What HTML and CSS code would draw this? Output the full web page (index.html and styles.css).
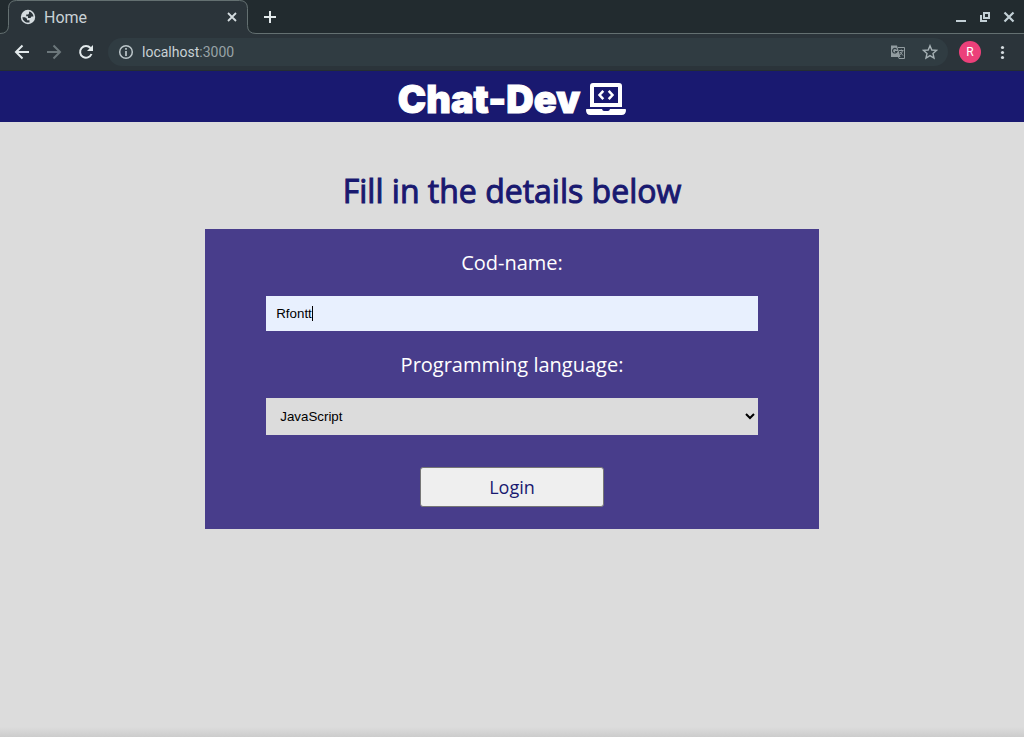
FILE: index.html
```html
<!DOCTYPE html>
<html lang="en">
<head>
<meta charset="utf-8">
<title>Home</title>
<link rel="stylesheet" href="styles.css">
</head>
<body>
<div class="browser">
  <div class="tab-strip">
    <div class="tab">
      <svg class="tab-shape" viewBox="0 0 256 34" aria-hidden="true"><path d="M0 33.5Q8.500 33.500 8.500 25.500V8.500Q8.500 .5 16.500 .5H239.500Q247.500 .5 247.500 8.500V25.500Q247.500 33.500 256 33.500V34H0Z" fill="#2b343a"/><path d="M0 33.500Q8.500 33.500 8.500 25.500V8.500Q8.500 .5 16.500 .5H239.500Q247.500 .5 247.500 8.500V25.500Q247.500 33.500 256 33.500" fill="none" stroke="#647071"/></svg>
      <svg class="icon" viewBox="0 0 16 16" aria-hidden="true"><circle cx="8" cy="8" r="7.200" fill="#d5dce0"/><path d="M9 2.600C11.500 3 13.300 5 13.500 7.500H11.500L10.500 9H8V7.200H6.200V5.500H8.200L9 4.500Z M2.400 8.200H5L7 9.800V11.200H9.500V13.400C6 14.300 2.600 11.800 2.400 8.200Z" fill="#2b343a"/></svg>
      <span class="tab-title">Home</span>
      <button class="icon-button" aria-label="Close tab"><svg class="icon" viewBox="0 0 16 16"><path d="M4 4L12 12M12 4L4 12" stroke="#d5dce0" stroke-width="1.800"/></svg></button>
    </div>
    <div class="strip-rest">
      <button class="icon-button" aria-label="New tab"><svg class="icon" viewBox="0 0 16 16"><path d="M8 2V14M2 8H14" stroke="#e3eaec" stroke-width="2"/></svg></button>
      <div class="window-buttons">
        <button class="icon-button" aria-label="Minimize"><svg class="icon" viewBox="0 0 16 16"><path d="M3 12H13" stroke="#c3d0d6" stroke-width="2"/></svg></button>
        <button class="icon-button" aria-label="Restore"><svg class="icon" viewBox="0 0 16 16"><path d="M7 4H12V9H7Z" fill="none" stroke="#c3d0d6" stroke-width="2"/><path d="M4 6V12H10" fill="none" stroke="#c3d0d6" stroke-width="2"/></svg></button>
        <button class="icon-button" aria-label="Close"><svg class="icon" viewBox="0 0 16 16"><path d="M3.500 3.500L12.500 12.500M12.500 3.500L3.500 12.500" stroke="#c3d0d6" stroke-width="2.200"/></svg></button>
      </div>
    </div>
  </div>
  <div class="toolbar">
    <button class="icon-button" aria-label="Back"><svg class="icon" viewBox="0 0 16 16"><path d="M15 8H2.500M8.500 1.500L2 8L8.500 14.500" fill="none" stroke="#e3eaec" stroke-width="2"/></svg></button>
    <button class="icon-button" aria-label="Forward"><svg class="icon" viewBox="0 0 16 16"><path d="M1 8H13.500M7.500 1.500L14 8L7.500 14.500" fill="none" stroke="#6c777b" stroke-width="2"/></svg></button>
    <button class="icon-button" aria-label="Reload"><svg class="icon" viewBox="0 0 16 16"><path d="M13.500 10A5.900 5.900 0 1 1 12.500 4" fill="none" stroke="#e3eaec" stroke-width="2"/><path d="M15 1V7H9Z" fill="#e3eaec"/></svg></button>
    <div class="address">
      <svg class="icon" viewBox="0 0 16 16" aria-hidden="true"><circle cx="8" cy="8" r="6.300" fill="none" stroke="#bcc6ca" stroke-width="1.500"/><path d="M8 4V5.700M8 7V12" stroke="#bcc6ca" stroke-width="1.700"/></svg>
      <span class="url">localhost<span class="port">:3000</span></span>
      <button class="icon-button" aria-label="Translate"><svg class="icon" viewBox="0 0 16 16"><path d="M1 1.500H7L10.500 13H1Z" fill="#929ca0"/><path d="M8 3.500H14.500V14.500H9L8.500 13" fill="none" stroke="#929ca0"/><path d="M6.800 5.500A2.300 2.300 0 1 0 7 7.500H5" fill="none" stroke="#303c42" stroke-width="1.200"/><path d="M9 6.500H13.500M11.300 5.500V6.500M12.500 6.500Q12 9.500 9.800 11M10 8L13 11.500" fill="none" stroke="#929ca0"/></svg></button>
      <button class="icon-button" aria-label="Bookmark"><svg class="icon" viewBox="0 0 16 16"><path d="M8 1.700L9.800 6L14.500 6.400L11 9.500L12 14L8 11.600L4 14L5 9.500L1.500 6.400L6.200 6Z" fill="none" stroke="#a6b1b5" stroke-width="1.400"/></svg></button>
    </div>
    <button class="avatar" aria-label="Profile">R</button>
    <button class="icon-button" aria-label="Menu"><svg class="icon" viewBox="0 0 16 16" fill="#d5dce0"><circle cx="8.500" cy="3.500" r="1.600"/><circle cx="8.500" cy="8.500" r="1.600"/><circle cx="8.500" cy="13.500" r="1.600"/></svg></button>
  </div>
</div>
<header class="site-header">
  <span class="brand">Chat-Dev</span>
  <svg class="laptop" viewBox="0 0 40 32" aria-hidden="true"><path fill="#fff" fill-rule="evenodd" d="M7 0H33Q36 0 36 3V24H4V3Q4 0 7 0ZM8 4V20H32V4Z"/><path fill="#fff" d="M.8 26H16Q16.500 28 18 28H22Q23.500 28 24 26H39.200Q40 26 40 27Q40 32 35.500 32H4.500Q0 32 0 27Q0 26 .8 26Z"/><path d="M17.300 7.800L13.500 12L17.300 16.200M22.700 7.800L26.500 12L22.700 16.200" fill="none" stroke="#fff" stroke-width="2.500"/></svg>
</header>
<main class="page">
  <h1 class="title">Fill in the details below</h1>
  <form class="card">
    <label class="label" for="name">Cod-name:</label>
    <div class="name-box">
      <input class="field" id="name" type="text" value="Rfontt">
      <span class="caret"></span>
    </div>
    <label class="label" for="language">Programming language:</label>
    <select class="field select" id="language"><option>JavaScript</option></select>
    <button class="login" type="button">Login</button>
  </form>
</main>
</body>
</html>
```
FILE: styles.css
```css
* {
  box-sizing: border-box;
}

body {
  margin: 0;
  min-height: 100vh;
  display: flex;
  flex-direction: column;
  background: #dcdcdc;
  font-family: "Open Sans", sans-serif;
}

.browser {
  background: #2b343a;
  border-bottom: 1px solid #252e32;
  font-family: Roboto, sans-serif;
}

.tab-strip {
  display: flex;
  height: 34px;
  background: #222b2f;
}

.tab {
  position: relative;
  display: flex;
  align-items: center;
  gap: 8px;
  width: 256px;
  padding: 0 16px 0 20px;
}

.tab-shape {
  position: absolute;
  inset: 0;
}

.tab > .icon,
.tab-title,
.tab > .icon-button {
  position: relative;
}

.tab-title {
  flex: 1;
  color: #c8d1d5;
  font-size: 16px;
}

.strip-rest {
  flex: 1;
  display: flex;
  align-items: center;
  justify-content: space-between;
  padding: 0 7px 0 6px;
  border-bottom: 1px solid #647071;
}

.window-buttons {
  display: flex;
  gap: 8px;
}

.icon {
  display: block;
  flex: none;
  width: 16px;
  height: 16px;
}

.icon-button {
  padding: 0;
  border: 0;
  background: none;
}

.toolbar {
  display: flex;
  align-items: center;
  gap: 16px;
  height: 36px;
  padding: 0 14px;
}

.address {
  flex: 1;
  display: flex;
  align-items: center;
  gap: 8px;
  height: 28px;
  margin: 0 -5px 0 -2px;
  padding: 0 10px;
  border-radius: 14px;
  background: #303c42;
}

.address .icon-button + .icon-button {
  margin-left: 8px;
}

.url {
  flex: 1;
  color: #c8d1d5;
  font-size: 14px;
}

.port {
  color: #98a3a7;
}

.avatar {
  width: 22px;
  height: 22px;
  padding: 0;
  border: 0;
  border-radius: 50%;
  background: #ec407a;
  color: #fff;
  font: 12px Roboto, sans-serif;
}

.toolbar > .avatar + .icon-button {
  margin-left: -3px;
}

.site-header {
  display: flex;
  align-items: center;
  justify-content: center;
  gap: 6px;
  height: 51px;
  padding-top: 4px;
  background: #191970;
}

.brand {
  color: #fff;
  font: 900 38px/40px Inter, sans-serif;
  -webkit-text-stroke: 1px #fff;
}

.laptop {
  width: 40px;
  height: 32px;
}

.page {
  flex: 1;
  padding-top: 45px;
  background: linear-gradient(to top, #cccccc, #dcdcdc 10px);
}

.title {
  margin: 0 0 14px;
  color: #191970;
  text-align: center;
  font-size: 32px;
  line-height: 48px;
  font-weight: 400;
  -webkit-text-stroke: 1px #191970;
}

.card {
  display: flex;
  flex-direction: column;
  align-items: center;
  width: 60%;
  margin: 0 auto;
  padding: 20px 0 22px;
  background: #483d8b;
}

.label {
  color: #fff;
  font-size: 20px;
  line-height: 27px;
}

.name-box {
  position: relative;
  width: 80%;
  margin: 20px 0;
}

.field {
  display: block;
  width: 100%;
  height: 35px;
  padding: 10px;
  border: 0;
  border-radius: 0;
  background: #e8f0fe;
  color: #000;
  font-family: "Liberation Sans", Arial, sans-serif;
}

.caret {
  position: absolute;
  top: 10px;
  left: 46px;
  width: 1px;
  height: 15px;
  background: #000;
}

.select {
  width: 80%;
  height: 37px;
  margin: 20px 0 32px;
  background: #dcdcdc;
}

.login {
  width: 30%;
  height: 40px;
  padding: 0;
  border: 1px solid #767676;
  border-radius: 3px;
  background: #efefef;
  color: #191970;
  font: 18px "Open Sans", sans-serif;
}
```
